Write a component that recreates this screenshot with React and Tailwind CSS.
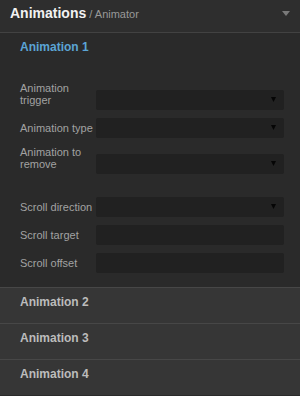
const fields = [
  { label: 'Animation trigger', select: true },
  { label: 'Animation type', select: true },
  { label: 'Animation to remove', select: true },
]

const scrollFields = [
  { label: 'Scroll direction', select: true },
  { label: 'Scroll target', select: false },
  { label: 'Scroll offset', select: false },
]

function FieldRow({ label, select }) {
  return (
    <div className="flex items-end">
      <label className="w-[76px] shrink-0 pb-[4px] text-[11px] leading-[12px] text-[#a2a2a2]">{label}</label>
      <div className="relative h-[20px] flex-1 rounded-[2px] bg-[#212121]">
        {select && (
          <svg className="absolute right-[8px] top-[7px]" width="5" height="5" viewBox="0 0 5 5">
            <path d="M0 0H5L2.5 5Z" fill="#050505" />
          </svg>
        )}
      </div>
    </div>
  )
}

function CollapsedItem({ title }) {
  return (
    <div className="h-[36px] border-t border-[#474747] bg-[#363636] px-[20px] pt-[7px]">
      <p className="text-[12px] font-bold leading-[14px] text-[#bcbcbc]">{title}</p>
    </div>
  )
}

export default function App() {
  return (
    <div className="h-[396px] w-[300px] overflow-hidden bg-[#2a2a2a] font-['Liberation_Sans',Arial,sans-serif]">
      <header className="flex h-[33px] items-start justify-between border-b border-[#424242] bg-[#2e2e2e] pl-[10px] pr-[10px] pt-[5px]">
        <h1 className="text-[14px] font-bold leading-[16px] text-[#f2f2f2]">
          Animations<span className="text-[11px] font-normal text-[#999999]"> / Animator</span>
        </h1>
        <svg className="mt-[6px]" width="8" height="5" viewBox="0 0 8 5">
          <path d="M0 0H8L4 5Z" fill="#7a7a7a" />
        </svg>
      </header>

      <section>
        <div className="h-[35px] px-[20px] pt-[7px]">
          <p className="text-[12px] font-bold leading-[14px] text-[#5ba4d4]">Animation 1</p>
        </div>
        <div className="pb-[14px] pl-[20px] pr-[16px] pt-[14px]">
          <div className="flex flex-col gap-[8px]">
            {fields.map((f) => (
              <FieldRow key={f.label} {...f} />
            ))}
          </div>
          <div className="mt-[23px] flex flex-col gap-[8px]">
            {scrollFields.map((f) => (
              <FieldRow key={f.label} {...f} />
            ))}
          </div>
        </div>
      </section>

      <CollapsedItem title="Animation 2" />
      <CollapsedItem title="Animation 3" />
      <CollapsedItem title="Animation 4" />
    </div>
  )
}
